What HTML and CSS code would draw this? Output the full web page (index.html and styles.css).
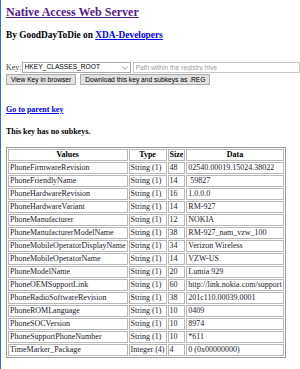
FILE: index.html
```html
<!DOCTYPE html>
<html lang="en">
  <head>
    <meta charset="UTF-8" />
    <title>Native Access Web Server</title>
    <link rel="stylesheet" href="styles.css">
  </head>
  <body>
    <h2 class="title"><a href="#" class="visited">Native Access Web Server</a></h2>
    <h3 class="byline">By GoodDayToDie on <a href="#">XDA-Developers</a></h3>

    <form class="key-form">
      <div class="key-row">
        <label for="hive">Key:</label>
        <div class="select-wrap">
          <select id="hive" name="hive">
            <option>HKEY_CLASSES_ROOT</option>
            <option>HKEY_CURRENT_USER</option>
            <option>HKEY_LOCAL_MACHINE</option>
            <option>HKEY_USERS</option>
          </select>
          <svg class="chevron" width="6" height="4" viewBox="0 0 6 4">
            <path d="M0.5 0.8 L3 3.2 L5.5 0.8" fill="none" stroke="#777" stroke-width="0.8" />
          </svg>
        </div>
        <input type="text" name="path" placeholder="Path within the registry hive" />
      </div>
      <div class="btn-row">
        <button type="submit">View Key in browser</button>
        <button type="button">Download this key and subkeys as .REG</button>
      </div>
    </form>

    <p class="parent"><a href="#">Go to parent key</a></p>
    <p class="no-subkeys">This key has no subkeys.</p>

    <table class="values">
      <tr>
        <th>Values</th>
        <th>Type</th>
        <th>Size</th>
        <th>Data</th>
      </tr>
      <tr><td>PhoneFirmwareRevision</td><td>String (1)</td><td>48</td><td>02540.00019.15024.38022</td></tr>
      <tr><td>PhoneFriendlyName</td><td>String (1)</td><td>14</td><td>&nbsp;59827</td></tr>
      <tr><td>PhoneHardwareRevision</td><td>String (1)</td><td>16</td><td>1.0.0.0</td></tr>
      <tr><td>PhoneHardwareVariant</td><td>String (1)</td><td>14</td><td>RM-927</td></tr>
      <tr><td>PhoneManufacturer</td><td>String (1)</td><td>12</td><td>NOKIA</td></tr>
      <tr><td>PhoneManufacturerModelName</td><td>String (1)</td><td>38</td><td>RM-927_nam_vzw_100</td></tr>
      <tr><td>PhoneMobileOperatorDisplayName</td><td>String (1)</td><td>34</td><td>Verizon Wireless</td></tr>
      <tr><td>PhoneMobileOperatorName</td><td>String (1)</td><td>14</td><td>VZW-US</td></tr>
      <tr><td>PhoneModelName</td><td>String (1)</td><td>20</td><td>Lumia 929</td></tr>
      <tr><td>PhoneOEMSupportLink</td><td>String (1)</td><td>60</td><td>http://link.nokia.com/support</td></tr>
      <tr><td>PhoneRadioSoftwareRevision</td><td>String (1)</td><td>38</td><td>201c110.00039.0001</td></tr>
      <tr><td>PhoneROMLanguage</td><td>String (1)</td><td>10</td><td>0409</td></tr>
      <tr><td>PhoneSOCVersion</td><td>String (1)</td><td>10</td><td>8974</td></tr>
      <tr><td>PhoneSupportPhoneNumber</td><td>String (1)</td><td>10</td><td>*611</td></tr>
      <tr><td>TimeMarker_Package</td><td>Integer (4)</td><td>4</td><td>0 (0x00000000)</td></tr>
    </table>
  </body>
</html>
```

FILE: styles.css
```css
html {
  overflow: hidden;
  background: white;
}

body {
  margin: 0;
  min-height: 100vh;
  box-sizing: border-box;
  padding-left: 5px;
  border-left: 1px solid #3b6db3;
  font-family: "Liberation Serif", "Times New Roman", serif;
  font-size: 8px;
  color: black;
}

a {
  color: #0000ee;
}

a.visited {
  color: #551a8b;
}

.title {
  margin: 5px 0 0;
  font-size: 12px;
  line-height: 14px;
}

.byline {
  margin: 11px 0 0;
  font-size: 9.36px;
  line-height: 11px;
}

.key-form {
  margin-top: 21px;
}

.key-row {
  display: flex;
  align-items: center;
  height: 11px;
  white-space: nowrap;
}

.key-row label {
  color: #444;
  width: 17px;
  line-height: 11px;
}

.select-wrap {
  position: relative;
}

.key-row select,
.key-row input {
  box-sizing: border-box;
  height: 11px;
  margin: 0;
  padding: 0 2px;
  border: 1px solid #a9a9a9;
  font-family: "Liberation Sans", Arial, sans-serif;
  font-size: 6.67px;
  background: white;
  color: black;
}

.key-row select {
  appearance: none;
  -webkit-appearance: none;
  width: 109px;
  padding-bottom: 1px;
  line-height: 8px;
  border-radius: 0;
  outline: none;
}

.chevron {
  position: absolute;
  right: 3px;
  top: 4px;
}

.key-row input {
  width: 200px;
  margin-left: 2px;
  border-color: #c8c8c8;
}

.key-row input::placeholder {
  color: #a0a0a0;
}

.btn-row {
  display: flex;
  gap: 4px;
  margin-top: 1px;
}

.btn-row button {
  box-sizing: border-box;
  height: 11px;
  padding: 0 4px;
  margin: 0;
  border: 1px solid #adadad;
  background: #e1e1e1;
  font-family: "Liberation Sans", Arial, sans-serif;
  font-size: 6.67px;
  line-height: 9px;
  color: black;
}

.parent {
  margin: 20px 0 0;
  font-weight: bold;
  line-height: 9px;
}

.no-subkeys {
  margin: 13px 0 0;
  font-weight: bold;
  line-height: 9px;
}

.values {
  margin-top: 11px;
  border: 1px solid #9a9a9a;
  border-spacing: 1px;
  white-space: nowrap;
}

.values th,
.values td {
  border: 1px solid #b8b8b8;
  padding: 0 1px;
  line-height: 10px;
  font-size: 8px;
}

.values th {
  text-align: center;
}

.values td {
  color: #1a1a2a;
  text-align: left;
}
```
